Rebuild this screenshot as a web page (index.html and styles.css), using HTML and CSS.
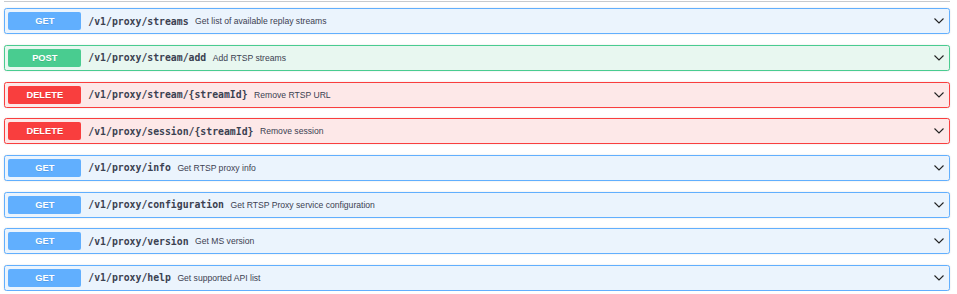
FILE: index.html
```html
<!DOCTYPE html>
<html lang="en">
<head>
<meta charset="utf-8">
<title>RTSP Proxy API</title>
<link rel="stylesheet" href="styles.css">
</head>
<body>
<div class="section">
  <div class="tag-rule"></div>
  <div class="ops">
    <div class="op op-get">
      <span class="method">GET</span>
      <span class="path">/v1/proxy/streams</span>
      <span class="desc">Get list of available replay streams</span>
      <svg class="arrow" viewBox="0 0 10 6" width="10" height="6"><polyline points="0.5,0.5 5,5 9.5,0.5"/></svg>
    </div>
    <div class="op op-post">
      <span class="method">POST</span>
      <span class="path">/v1/proxy/stream/add</span>
      <span class="desc">Add RTSP streams</span>
      <svg class="arrow" viewBox="0 0 10 6" width="10" height="6"><polyline points="0.5,0.5 5,5 9.5,0.5"/></svg>
    </div>
    <div class="op op-delete">
      <span class="method">DELETE</span>
      <span class="path">/v1/proxy/stream/{streamId}</span>
      <span class="desc">Remove RTSP URL</span>
      <svg class="arrow" viewBox="0 0 10 6" width="10" height="6"><polyline points="0.5,0.5 5,5 9.5,0.5"/></svg>
    </div>
    <div class="op op-delete">
      <span class="method">DELETE</span>
      <span class="path">/v1/proxy/session/{streamId}</span>
      <span class="desc">Remove session</span>
      <svg class="arrow" viewBox="0 0 10 6" width="10" height="6"><polyline points="0.5,0.5 5,5 9.5,0.5"/></svg>
    </div>
    <div class="op op-get">
      <span class="method">GET</span>
      <span class="path">/v1/proxy/info</span>
      <span class="desc">Get RTSP proxy info</span>
      <svg class="arrow" viewBox="0 0 10 6" width="10" height="6"><polyline points="0.5,0.5 5,5 9.5,0.5"/></svg>
    </div>
    <div class="op op-get">
      <span class="method">GET</span>
      <span class="path">/v1/proxy/configuration</span>
      <span class="desc">Get RTSP Proxy service configuration</span>
      <svg class="arrow" viewBox="0 0 10 6" width="10" height="6"><polyline points="0.5,0.5 5,5 9.5,0.5"/></svg>
    </div>
    <div class="op op-get">
      <span class="method">GET</span>
      <span class="path">/v1/proxy/version</span>
      <span class="desc">Get MS version</span>
      <svg class="arrow" viewBox="0 0 10 6" width="10" height="6"><polyline points="0.5,0.5 5,5 9.5,0.5"/></svg>
    </div>
    <div class="op op-get">
      <span class="method">GET</span>
      <span class="path">/v1/proxy/help</span>
      <span class="desc">Get supported API list</span>
      <svg class="arrow" viewBox="0 0 10 6" width="10" height="6"><polyline points="0.5,0.5 5,5 9.5,0.5"/></svg>
    </div>
  </div>
</div>
</body>
</html>
```
FILE: styles.css
```css
html, body {
  margin: 0;
  padding: 0;
  background: #ffffff;
}

body {
  font-family: "Liberation Sans", Arial, sans-serif;
  color: #3b4151;
}

.section {
  width: 946px;
  padding: 1px 0 0 4px;
}

.tag-rule {
  height: 1px;
  background: #c8cace;
  margin-bottom: 6.3px;
}

.ops {
  display: flex;
  flex-direction: column;
  gap: 10.67px;
}

.op {
  box-sizing: border-box;
  height: 26px;
  border: 1px solid;
  border-radius: 2.6px;
  display: flex;
  align-items: center;
  padding: 0 5px 0 3.3px;
  box-shadow: 0 0 2px rgba(0, 0, 0, 0.12);
}

.op-get {
  background: #ebf4fd;
  border-color: #61affe;
}

.op-post {
  background: #e8f7f0;
  border-color: #49cc90;
}

.op-delete {
  background: #fde8e8;
  border-color: #f93e3e;
}

.method {
  flex: none;
  box-sizing: border-box;
  width: 73px;
  height: 18px;
  line-height: 18px;
  border-radius: 2px;
  text-align: center;
  color: #ffffff;
  font-size: 9.3px;
  font-weight: 700;
  text-shadow: 0 1px 0 rgba(0, 0, 0, 0.1);
}

.op-get .method { background: #61affe; }
.op-post .method { background: #49cc90; }
.op-delete .method { background: #f93e3e; }

.path {
  flex: none;
  padding: 0 6.5px 0 7px;
  font-family: "DejaVu Sans Mono", "Liberation Mono", monospace;
  font-size: 9.8px;
  font-weight: 600;
  color: #3b4151;
}

.desc {
  flex: 1;
  font-size: 8.6px;
  color: #3b4151;
}

.arrow {
  flex: none;
  fill: none;
  stroke: #222;
  stroke-width: 1.1;
}
```
